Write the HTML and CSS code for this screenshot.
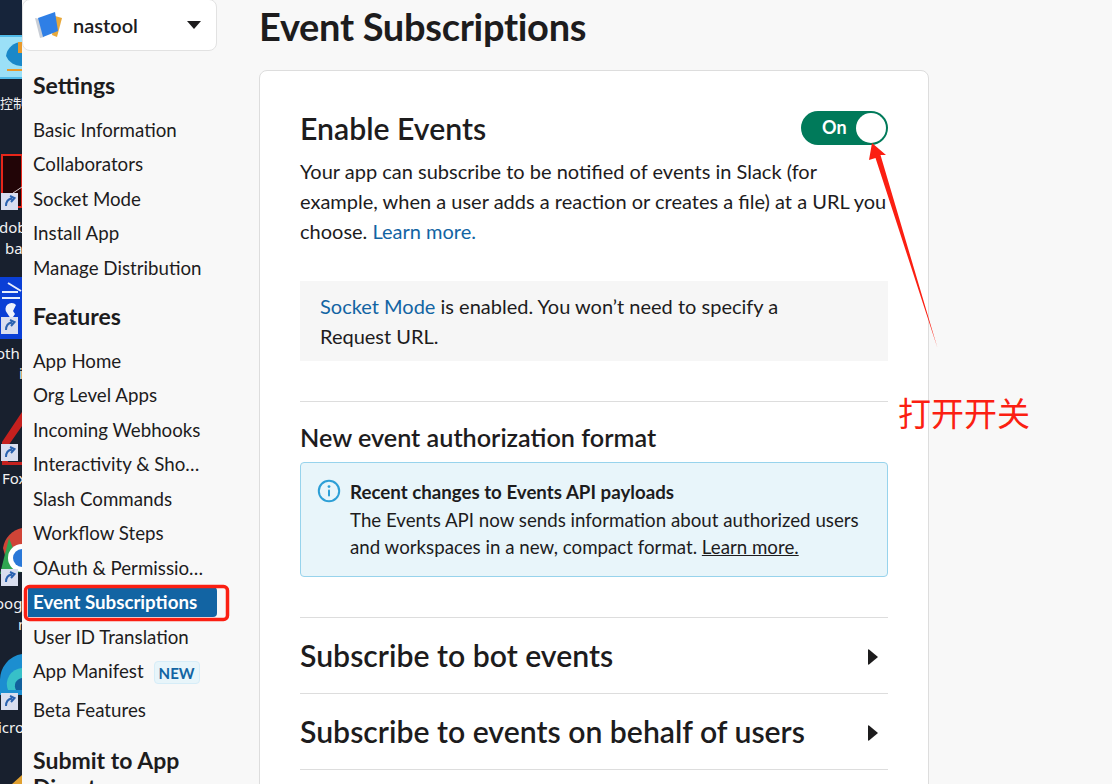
FILE: index.html
```html
<!DOCTYPE html>
<html lang="en">
<head>
<meta charset="utf-8">
<title>Event Subscriptions</title>
<link rel="stylesheet" href="styles.css">
</head>
<body>
<div class="page">
  <svg class="desktop" width="22" height="784" viewBox="0 0 22 784" aria-hidden="true">
    <rect width="22" height="784" fill="#18202e"/>
    <path d="M0 0H22V34H0Z" fill="#16243a"/>
    <path d="M0 35H22V79H0Z" fill="#4fb9e8"/>
    <path d="M0 37H22V77H0Z" fill="#9be0f7"/>
    <path d="M22 42A16 16 0 0 0 6 56A16 16 0 0 0 22 66Z" fill="#1a88c9"/>
    <rect x="18" y="42" width="4" height="11" fill="#e89a2c"/>
    <rect x="7" y="69" width="15" height="2" fill="#e89a2c"/>
    <text class="desk-cjk" x="0" y="108">控制</text>
    <rect x="2" y="155" width="20" height="52" fill="#220507" stroke="#e8261a" stroke-width="2"/>
    <path d="M13 193L22 187" stroke="#d8c8c8" stroke-width="1"/>
    <text class="desk-label" x="-1" y="233">dob</text>
    <text class="desk-label" x="5" y="254">ba</text>
    <rect y="277" width="22" height="62" fill="#0a3fd6"/>
    <path d="M2 292H18M2 298H20M8 283L21 291" stroke="#e8eefc" stroke-width="2" fill="none"/>
    <path d="M7 313A6 6 0 0 1 16 305L13 311L15 314L13 317V326H11V319Z" fill="#eef2fc"/>
    <text class="desk-label" x="-4" y="359">oth</text>
    <text class="desk-label" x="19" y="379">i</text>
    <path d="M2 442L22 412V426L8 446V462H22V465H2Z" fill="#c5201e"/>
    <text class="desk-label" x="2" y="484">Fox</text>
    <path d="M3 548A24 24 0 0 1 22 528V546L8 566Z" fill="#d04437"/>
    <path d="M0 574L9 538L22 572Z" fill="#2fa551"/>
    <path d="M22 544A14 14 0 0 0 22 572Z" fill="#fff"/>
    <path d="M22 549A9 9 0 0 0 22 567Z" fill="#2a78d8"/>
    <text class="desk-label" x="-5" y="609">oog</text>
    <text class="desk-label" x="18" y="630">n</text>
    <path d="M0 695V680A26 26 0 0 1 22 654V695Z" fill="#1c8ed0"/>
    <path d="M8 690A16 16 0 0 1 22 668V690Z" fill="#37c0c8"/>
    <path d="M16 690A8 8 0 0 1 22 678V690Z" fill="#12609c"/>
    <text class="desk-label" x="-2" y="733">icro</text>
    <path d="M12 784L22 775V784Z" fill="#e0a030"/>
    <g>
      <rect x="1" y="193" width="17" height="17" fill="#d9deef"/>
      <path d="M6 206C6 201 8 199 12 198.500M10 196L14.500 198L11 202" stroke="#2a62b0" stroke-width="2" fill="none"/>
      <rect x="1" y="317" width="17" height="17" fill="#d9deef"/>
      <path d="M6 330C6 325 8 323 12 322.500M10 320L14.500 322L11 326" stroke="#2a62b0" stroke-width="2" fill="none"/>
      <rect x="1" y="444" width="17" height="17" fill="#d9deef"/>
      <path d="M6 457C6 452 8 450 12 449.500M10 447L14.500 449L11 453" stroke="#2a62b0" stroke-width="2" fill="none"/>
      <rect x="1" y="569" width="17" height="17" fill="#d9deef"/>
      <path d="M6 582C6 577 8 575 12 574.500M10 572L14.500 574L11 578" stroke="#2a62b0" stroke-width="2" fill="none"/>
      <rect x="1" y="693" width="17" height="17" fill="#d9deef"/>
      <path d="M6 706C6 701 8 699 12 698.500M10 696L14.500 698L11 702" stroke="#2a62b0" stroke-width="2" fill="none"/>
    </g>
  </svg>

  <aside class="sidebar">
    <div class="workspace">
      <svg class="workspace-icon" width="28" height="28" viewBox="0 0 28 28" aria-hidden="true">
        <path d="M0 7L5 27L9 26L5 8Z" fill="#c9ced6"/>
        <path d="M20 5L27 7L22 26L17 24Z" fill="#e8a93c"/>
        <path d="M3 7L20 1L23 20L8 26Z" fill="#2f7fe6"/>
      </svg>
      <span class="workspace-name">nastool</span>
      <svg class="workspace-caret" width="14" height="8" viewBox="0 0 14 8" aria-hidden="true"><path d="M0 0H14L7 8Z" fill="#1d1c1d"/></svg>
    </div>

    <h2 class="nav-heading">Settings</h2>
    <ul class="nav-list">
      <li class="nav-item">Basic Information</li>
      <li class="nav-item">Collaborators</li>
      <li class="nav-item">Socket Mode</li>
      <li class="nav-item">Install App</li>
      <li class="nav-item">Manage Distribution</li>
    </ul>

    <h2 class="nav-heading nav-heading-next">Features</h2>
    <ul class="nav-list">
      <li class="nav-item">App Home</li>
      <li class="nav-item">Org Level Apps</li>
      <li class="nav-item">Incoming Webhooks</li>
      <li class="nav-item">Interactivity &amp; Shortcuts</li>
      <li class="nav-item">Slash Commands</li>
      <li class="nav-item">Workflow Steps</li>
      <li class="nav-item">OAuth &amp; Permissions</li>
      <li class="nav-item nav-active">Event Subscriptions</li>
      <li class="nav-item">User ID Translation</li>
      <li class="nav-item nav-manifest"><span>App Manifest</span><span class="new-badge">NEW</span></li>
      <li class="nav-item nav-beta">Beta Features</li>
    </ul>

    <h2 class="nav-heading nav-heading-submit">Submit to App Directory</h2>
  </aside>

  <main class="main">
    <h1 class="page-title">Event Subscriptions</h1>
    <section class="card">
      <div class="enable-row">
        <h2 class="section-title">Enable Events</h2>
        <div class="toggle"><span class="toggle-label">On</span><span class="toggle-knob"></span></div>
      </div>
      <p class="body-text">Your app can subscribe to be notified of events in Slack (for example, when a user adds a reaction or creates a file) at a URL you choose. <a class="link">Learn more.</a></p>
      <div class="socket-box"><a class="link">Socket Mode</a> is enabled. You won’t need to specify a Request URL.</div>
      <hr class="rule rule-first">
      <h3 class="sub-title">New event authorization format</h3>
      <div class="info-box">
        <svg class="info-icon" width="24" height="24" viewBox="0 0 24 24" aria-hidden="true">
          <circle cx="12" cy="12" r="10.2" fill="none" stroke="#2d9fd6" stroke-width="2"/>
          <circle cx="12" cy="7.6" r="1.4" fill="#2d9fd6"/>
          <rect x="11" y="10.5" width="2" height="7" rx="1" fill="#2d9fd6"/>
        </svg>
        <div class="info-text">
          <strong class="info-title">Recent changes to Events API payloads</strong>
          <p class="info-body">The Events API now sends information about authorized users and workspaces in a new, compact format. <a class="info-link">Learn more.</a></p>
        </div>
      </div>
      <hr class="rule rule-second">
      <div class="expander"><h2 class="section-title">Subscribe to bot events</h2><svg class="expander-arrow" width="10" height="16" viewBox="0 0 10 16" aria-hidden="true"><path d="M0 1Q0 0 1 0.5L10 8L1 15.5Q0 16 0 15Z" fill="#1d1c1d"/></svg></div>
      <div class="expander"><h2 class="section-title">Subscribe to events on behalf of users</h2><svg class="expander-arrow" width="10" height="16" viewBox="0 0 10 16" aria-hidden="true"><path d="M0 1Q0 0 1 0.5L10 8L1 15.5Q0 16 0 15Z" fill="#1d1c1d"/></svg></div>
    </section>
  </main>

  <svg class="annotations" width="1112" height="784" viewBox="0 0 1112 784" aria-hidden="true">
    <rect x="25.5" y="586.5" width="202" height="33" rx="4" fill="none" stroke="#fb1f12" stroke-width="3.500"/>
    <path d="M872 143L886 155L880.500 155L937.500 348L875.500 158L869 160Z" fill="#fb1f12"/>
  </svg>
  <div class="note">打开开关</div>
</div>
</body>
</html>
```

FILE: styles.css
```css
* { box-sizing: border-box; }
html, body { margin: 0; padding: 0; }
body {
  font-family: Lato, "Noto Sans", sans-serif;
  color: #1d1c1d;
  background: #f8f8f8;
}
.page {
  position: relative;
  display: flex;
  width: 1112px;
  height: 784px;
  overflow: hidden;
  background: #f8f8f8;
}
.desktop { flex: none; display: block; }
.desk-label { font-family: "Noto Sans", sans-serif; font-size: 15px; fill: #f2f2f2; }
.desk-cjk { font-family: "Noto Sans CJK SC", sans-serif; font-size: 13px; fill: #f2f2f2; }

.sidebar { flex: none; width: 195px; margin-right: 42px; }
.workspace {
  display: flex;
  align-items: center;
  height: 52px;
  margin-top: -1px;
  padding: 0 15px 0 12px;
  background: #fff;
  border: 1px solid #e2e2e2;
  border-radius: 8px;
}
.workspace-icon { flex: none; margin-right: 10px; }
.workspace-name { flex: 1; font-size: 20px; font-weight: 600; }
.workspace-caret { flex: none; }

.nav-heading {
  margin: 0;
  padding: 0 0 0 11px;
  font-size: 23px;
  line-height: 27px;
  font-weight: 700;
}
.sidebar > .nav-heading:first-of-type { margin-top: 21px; }
.nav-heading-next { margin-top: 18px; }
.nav-heading-submit { margin-top: 20px; }
.nav-list { list-style: none; margin: 13.500px 0 0; padding: 0; }
.nav-item {
  height: 34.5px;
  padding-left: 11px;
  padding-right: 13px;
  font-size: 18.72px;
  line-height: 34.5px;
  color: #1d1c1d;
  white-space: nowrap;
  overflow: hidden;
  text-overflow: ellipsis;
}
.nav-active {
  height: 30px;
  margin: 2px 0 2.500px 6px;
  padding-left: 5px;
  line-height: 30px;
  font-weight: 700;
  color: #fff;
  background: #1264a3;
  border-radius: 0 4px 4px 0;
}
.nav-manifest { display: flex; align-items: center; gap: 10px; overflow: visible; }
.new-badge {
  padding: 0 4px;
  height: 23px;
  margin-top: 2px;
  font-size: 15px;
  line-height: 22px;
  font-weight: 700;
  color: #1264a3;
  background: #e8f5fa;
  border: 1px solid #d6edf8;
  border-radius: 4px;
}
.nav-beta { margin-top: 4px; }

.main { flex: none; width: 670px; }
.page-title {
  margin: 0;
  height: 70px;
  font-size: 38px;
  line-height: 52px;
  font-weight: 700;
  letter-spacing: -0.3px;
}
.card {
  padding: 40px 40px 0;
  height: 800px;
  background: #fff;
  border: 1px solid #ddd;
  border-radius: 8px;
}
.enable-row { display: flex; justify-content: space-between; align-items: center; height: 34px; }
.section-title { margin: 0; font-size: 30.2px; line-height: 38px; font-weight: 600; white-space: nowrap; }
.toggle {
  display: flex;
  align-items: center;
  justify-content: space-between;
  width: 87px;
  height: 34px;
  padding: 0 2px 0 21px;
  background: #007a5a;
  border-radius: 17px;
}
.toggle-label { color: #fff; font-size: 18px; font-weight: 700; padding-bottom: 2px; }
.toggle-knob { width: 30px; height: 30px; background: #fff; border-radius: 50%; }
.body-text { margin: 11px 0 0; font-size: 20px; line-height: 30px; }
.link { color: #1264a3; }
.socket-box {
  margin-top: 35px;
  padding: 10px 100px 10px 20px;
  height: 80px;
  font-size: 20px;
  line-height: 30px;
  background: #f6f6f6;
}
.rule { margin: 0; border: 0; border-top: 1px solid #ddd; }
.rule-first { margin-top: 40px; }
.sub-title { margin: 20px 0 0; font-size: 25.2px; line-height: 30px; font-weight: 600; }
.info-box {
  display: flex;
  gap: 9px;
  margin-top: 10px;
  height: 115px;
  padding: 16px 16px 0;
  background: #e8f5fa;
  border: 1px solid #97d3ec;
  border-radius: 4px;
}
.info-icon { flex: none; }
.info-text { font-size: 18.72px; line-height: 27px; }
.info-title { display: block; font-weight: 700; margin-bottom: 1px; }
.info-body { margin: 0; }
.info-link { text-decoration: underline; }
.rule-second { margin-top: 40px; }
.expander {
  display: flex;
  align-items: center;
  justify-content: space-between;
  height: 76px;
  padding-right: 10px;
  padding-bottom: 2px;
  border-bottom: 1px solid #ddd;
}
.expander-arrow { margin-top: 5px; }

.annotations { position: absolute; left: 0; top: 0; pointer-events: none; }
.note {
  position: absolute;
  left: 898px;
  top: 388px;
  font-family: "Noto Sans CJK SC", sans-serif;
  font-size: 33px;
  line-height: 48px;
  color: #fb1f12;
  white-space: nowrap;
}
```
